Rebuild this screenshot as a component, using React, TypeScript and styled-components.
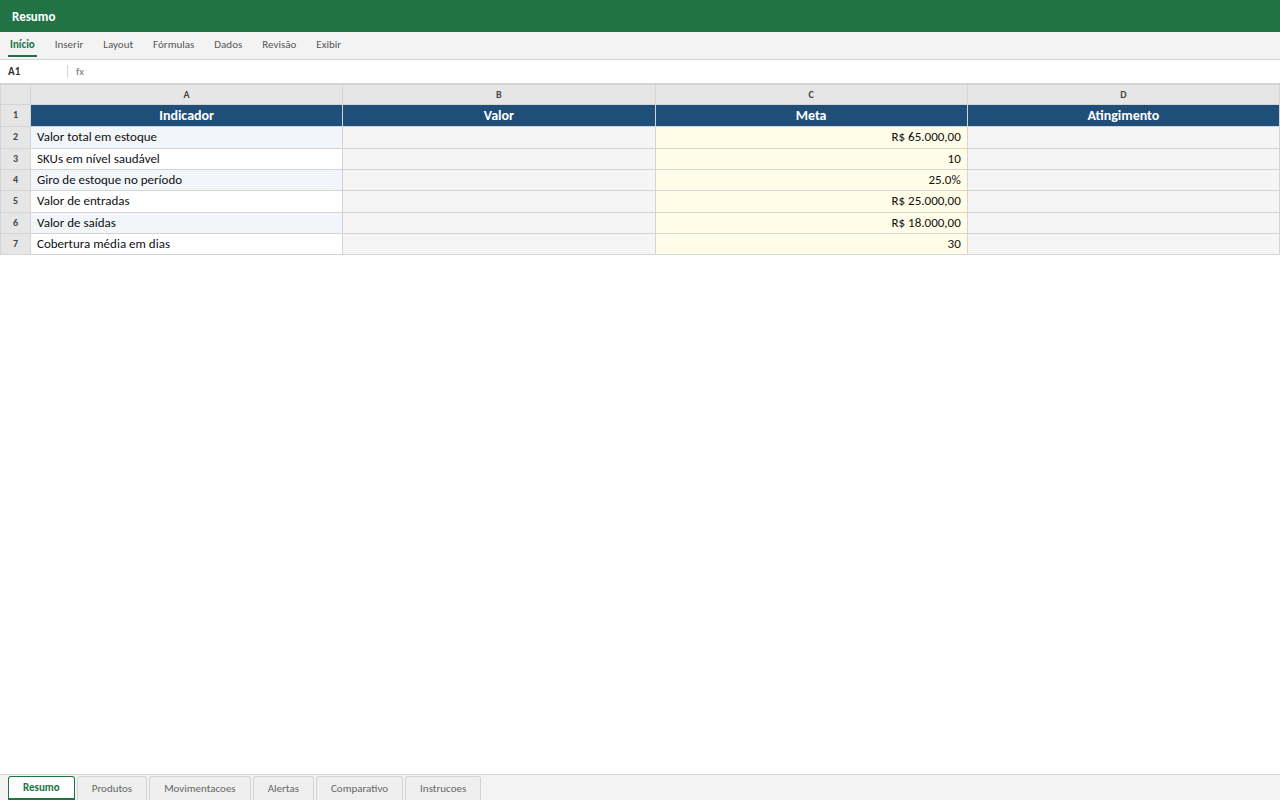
import React from "react";
import styled, { createGlobalStyle } from "styled-components";

const Global = createGlobalStyle`
  html, body { margin: 0; padding: 0; height: 100%; background: #fff; }
  body { font-family: Carlito, Calibri, Lato, "Liberation Sans", sans-serif; }
  #root { height: 100%; }
`;

const Page = styled.div`
  height: 800px;
  display: flex;
  flex-direction: column;
  overflow: hidden;
`;

const TitleBar = styled.header`
  height: 32px;
  flex: none;
  background: #217346;
  color: #fff;
  display: flex;
  align-items: center;
  padding: 0 12px;
  font-size: 13px;
  font-weight: 700;
`;

const Ribbon = styled.nav`
  height: 27px;
  flex: none;
  background: #f3f3f3;
  border-bottom: 1px solid #d4d4d4;
  display: flex;
  align-items: flex-start;
  padding: 0 8px;
  gap: 16px;
`;

const RibbonTab = styled.div<{ $active?: boolean }>`
  height: 25px;
  box-sizing: border-box;
  padding: 2px 2px 0;
  display: flex;
  align-items: center;
  font-size: 11px;
  font-weight: ${(p) => (p.$active ? 700 : 400)};
  color: ${(p) => (p.$active ? "#217346" : "#555")};
  border-bottom: 2px solid ${(p) => (p.$active ? "#217346" : "transparent")};
`;

const FormulaBar = styled.div`
  height: 23px;
  flex: none;
  background: #fff;
  border-bottom: 1px solid #d4d4d4;
  display: flex;
  align-items: center;
  padding: 0 8px;
`;

const CellName = styled.div`
  width: 59px;
  font-size: 11px;
  font-weight: 700;
  color: #333;
`;

const Fx = styled.div`
  border-left: 1px solid #d4d4d4;
  height: 13px;
  padding-left: 8px;
  display: flex;
  align-items: center;
  font-size: 11px;
  color: #777;
`;

const SheetArea = styled.main`
  flex: 1;
  min-height: 0;
`;

const Table = styled.table`
  width: 1280px;
  table-layout: fixed;
  border-collapse: collapse;
`;

const Corner = styled.th`
  width: 29px;
  height: 19px;
  padding: 0;
  background: #e6e6e6;
  border: 1px solid #d4d4d4;
`;

const ColHead = styled.th`
  height: 19px;
  padding: 0;
  background: #e6e6e6;
  border: 1px solid #d4d4d4;
  font-size: 10px;
  font-weight: 700;
  color: #444;
  text-align: center;
`;

const RowHead = styled.th`
  padding: 0 0 2px;
  background: #e6e6e6;
  border: 1px solid #d4d4d4;
  font-size: 10px;
  font-weight: 700;
  color: #444;
  text-align: center;
`;

const HeaderCell = styled.td`
  padding: 0 6px 1px;
  background: #1f4e78;
  border: 1px solid #d4d4d4;
  color: #fff;
  font-size: 14px;
  font-weight: 700;
  text-align: center;
`;

const Row = styled.tr<{ $h: number }>`
  height: ${(p) => p.$h}px;
`;

const LabelCell = styled.td<{ $alt: boolean }>`
  padding: 0 6px 2px;
  background: ${(p) => (p.$alt ? "#f2f6fb" : "#fff")};
  border: 1px solid #d4d4d4;
  font-size: 13px;
  color: #111;
`;

const EmptyCell = styled.td`
  padding: 0 6px;
  background: #f5f5f5;
  border: 1px solid #d4d4d4;
`;

const GoalCell = styled.td`
  padding: 0 6px 2px;
  background: #fffde7;
  border: 1px solid #d4d4d4;
  font-size: 13px;
  color: #111;
  text-align: right;
`;

const TabBar = styled.footer`
  height: 24px;
  flex: none;
  background: #f3f3f3;
  border-top: 1px solid #d4d4d4;
  display: flex;
  align-items: flex-start;
  padding: 1px 8px 0;
  gap: 2px;
`;

const SheetTab = styled.div<{ $active?: boolean }>`
  height: 24px;
  box-sizing: border-box;
  padding: 0 14px;
  display: flex;
  align-items: center;
  font-size: 11px;
  font-weight: ${(p) => (p.$active ? 700 : 400)};
  color: ${(p) => (p.$active ? "#217346" : "#666")};
  background: ${(p) => (p.$active ? "#fff" : "#efefef")};
  border: 1px solid ${(p) => (p.$active ? "#217346" : "#d4d4d4")};
  border-bottom: ${(p) => (p.$active ? "2px solid #217346" : "none")};
  border-radius: 3px 3px 0 0;
`;

const menus = ["Início", "Inserir", "Layout", "Fórmulas", "Dados", "Revisão", "Exibir"];
const rows = [
  ["Valor total em estoque", "R$ 65.000,00", 22],
  ["SKUs em nível saudável", "10", 21],
  ["Giro de estoque no período", "25.0%", 21],
  ["Valor de entradas", "R$ 25.000,00", 22],
  ["Valor de saídas", "R$ 18.000,00", 21],
  ["Cobertura média em dias", "30", 21],
] as const;
const tabs = ["Resumo", "Produtos", "Movimentacoes", "Alertas", "Comparativo", "Instrucoes"];

export default function App() {
  return (
    <Page>
      <Global />
      <TitleBar>Resumo</TitleBar>
      <Ribbon>
        {menus.map((m, i) => (
          <RibbonTab key={m} $active={i === 0}>{m}</RibbonTab>
        ))}
      </Ribbon>
      <FormulaBar>
        <CellName>A1</CellName>
        <Fx>fx</Fx>
      </FormulaBar>
      <SheetArea>
        <Table>
          <thead>
            <tr>
              <Corner />
              {["A", "B", "C", "D"].map((c) => (
                <ColHead key={c}>{c}</ColHead>
              ))}
            </tr>
          </thead>
          <tbody>
            <Row $h={22}>
              <RowHead>1</RowHead>
              {["Indicador", "Valor", "Meta", "Atingimento"].map((h) => (
                <HeaderCell key={h}>{h}</HeaderCell>
              ))}
            </Row>
            {rows.map(([label, goal, h], i) => (
              <Row key={label} $h={h}>
                <RowHead>{i + 2}</RowHead>
                <LabelCell $alt={i % 2 === 0}>{label}</LabelCell>
                <EmptyCell />
                <GoalCell>{goal}</GoalCell>
                <EmptyCell />
              </Row>
            ))}
          </tbody>
        </Table>
      </SheetArea>
      <TabBar>
        {tabs.map((t, i) => (
          <SheetTab key={t} $active={i === 0}>{t}</SheetTab>
        ))}
      </TabBar>
    </Page>
  );
}
